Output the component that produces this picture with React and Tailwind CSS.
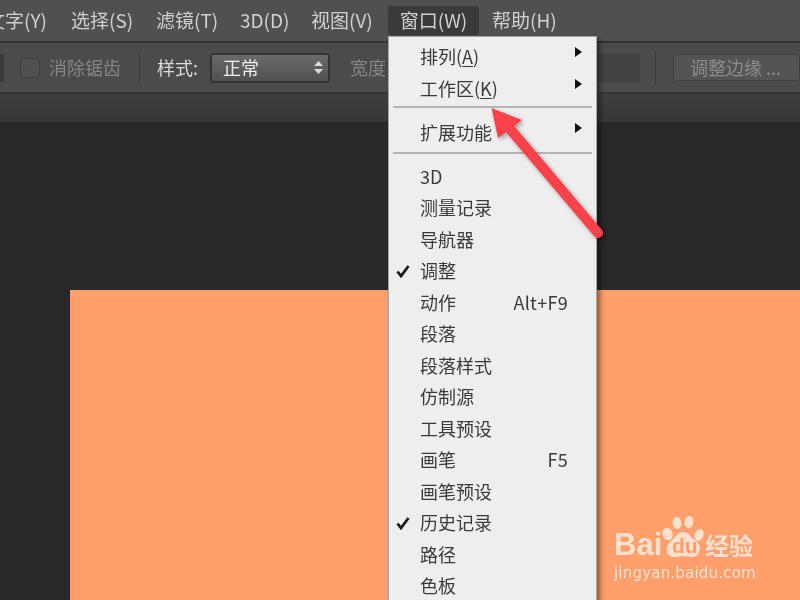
const cjk = { fontFamily: '"Noto Sans CJK SC", "Liberation Sans", sans-serif' };

const topMenus = [
  { label: '文字(Y)', box: 'w-[59px] -ml-[14px]' },
  { label: '选择(S)', box: 'w-[60px] ml-[26px]' },
  { label: '滤镜(T)', box: 'w-[60px] ml-[25px]' },
  { label: '3D(D)', box: 'w-[46px] ml-[24px]' },
  { label: '视图(V)', box: 'w-[62px] ml-[25px]' },
];

const windowItems = [
  { label: '3D' },
  { label: '测量记录' },
  { label: '导航器' },
  { label: '调整', checked: true },
  { label: '动作', shortcut: 'Alt+F9' },
  { label: '段落' },
  { label: '段落样式' },
  { label: '仿制源' },
  { label: '工具预设' },
  { label: '画笔', shortcut: 'F5' },
  { label: '画笔预设' },
  { label: '历史记录', checked: true },
  { label: '路径' },
  { label: '色板' },
];

function MenuRow({ label, hotkey, shortcut, checked, submenu }) {
  return (
    <div className="flex items-center h-[31.5px] shrink-0 text-[18px] text-[#3a3a3a]">
      <div className="w-[31px] flex pl-[7px]">
        {checked && (
          <svg width="14" height="14" viewBox="0 0 14 14">
            <path d="M1.5 7.5 L5 12 L12.5 2" fill="none" stroke="#1a1a1a" strokeWidth="2.8" />
          </svg>
        )}
      </div>
      <span>
        {label}
        {hotkey && (
          <>
            (<span className="underline underline-offset-2">{hotkey}</span>)
          </>
        )}
      </span>
      {shortcut && <span className="ml-auto mr-[28px] tracking-[0.3px]">{shortcut}</span>}
      {submenu && (
        <svg className="ml-auto mr-[14px] mb-[9px]" width="7" height="10" viewBox="0 0 7 10">
          <path d="M0 0 L7 5 L0 10 Z" fill="#111" />
        </svg>
      )}
    </div>
  );
}

function Watermark() {
  return (
    <div className="absolute right-[44px] bottom-[17px] w-[142px] text-[#ffe0cf]">
      <div className="flex items-end h-[46px]">
        <span className="w-[48px] shrink-0 text-[31px] leading-[30px] font-bold" style={{ fontFamily: '"Liberation Sans", sans-serif' }}>Bai</span>
        <div className="relative w-[44px] h-[46px] shrink-0">
          <svg width="44" height="46" viewBox="0 0 44 46" fill="#ffe0cf">
            <ellipse cx="5.5" cy="20" rx="5" ry="6.5" transform="rotate(-20 5.5 20)" />
            <ellipse cx="15" cy="9" rx="4.5" ry="6" transform="rotate(-8 15 9)" />
            <ellipse cx="27" cy="8" rx="4.5" ry="6" transform="rotate(8 27 8)" />
            <ellipse cx="37" cy="21" rx="4.5" ry="6" transform="rotate(20 37 21)" />
            <path d="M21 18 C27 18 28 23 34 27 C41 32 38 43 30 43 C26 43 24 42 21 42 C18 42 16 43 12 43 C4 43 2 33 9 27 C14 23 15 18 21 18 Z" />
          </svg>
          <span className="absolute left-[10px] bottom-[2px] text-[21px] leading-[24px] font-bold text-[#ff9f6b]" style={{ fontFamily: '"Liberation Sans", sans-serif' }}>du</span>
        </div>
        <span className="-ml-[1px] text-[24px] leading-[30px] font-bold whitespace-nowrap" style={cjk}>经验</span>
      </div>
      <div className="mt-[3px] text-[15px] leading-[20px] tracking-[0.2px] whitespace-nowrap" style={{ fontFamily: '"DejaVu Sans", sans-serif' }}>jingyan.baidu.com</div>
    </div>
  );
}

export default function App() {
  return (
    <div className="relative w-[800px] h-[600px] overflow-hidden bg-[#282828] flex flex-col blur-[0.4px]" style={cjk}>
      {/* menu bar */}
      <div className="h-[41px] shrink-0 flex items-center bg-[#505050] text-[19px] text-[#d0d0d0] whitespace-nowrap border-b-2 border-[#323232] box-content">
        {topMenus.map((m) => (
          <span key={m.label} className={`${m.box} shrink-0`}>{m.label}</span>
        ))}
        <span className="w-[91px] h-[29px] ml-[15px] shrink-0 rounded-[3px] bg-[#3a3a3a] flex items-center justify-center">窗口(W)</span>
        <span className="w-[64px] ml-[13px] shrink-0">帮助(H)</span>
      </div>

      {/* options bar */}
      <div className="h-[49px] shrink-0 flex items-center bg-[#4b4b4b] border-b-2 border-[#333333] box-content text-[18px] whitespace-nowrap">
        <div className="w-[4px] h-[28px] shrink-0 bg-[#3a3a3a]" />
        <div className="w-[20px] h-[20px] ml-[16px] shrink-0 rounded-[3px] border border-[#3d3d3d] bg-[#505050]" />
        <span className="ml-[9px] w-[71px] shrink-0 text-[#858585]">消除锯齿</span>
        <div className="ml-[19px] w-[1px] h-[34px] shrink-0 bg-[#383838]" />
        <span className="ml-[17px] w-[53px] shrink-0 text-[#dcdcdc]">样式:</span>
        <div className="w-[120px] h-[30px] shrink-0 rounded-[3px] border-2 border-[#333333] bg-gradient-to-b from-[#6a6a6a] to-[#505050] flex items-center pl-[11px] pr-[5px] text-[#ececec]">
          <span>正常</span>
          <svg className="ml-auto" width="9" height="13" viewBox="0 0 9 13" fill="#dcdcdc">
            <path d="M4.5 0 L9 5 L0 5 Z M0 8 L9 8 L4.5 13 Z" />
          </svg>
        </div>
        <span className="ml-[20px] w-[247px] shrink-0 text-[#858585]">宽度</span>
        <div className="w-[43px] h-[28px] shrink-0 bg-[#434343] border border-[#3f3f3f]" />
        <div className="ml-[15px] w-[1px] h-[34px] shrink-0 bg-[#383838]" />
        <div className="ml-[17px] w-[127px] h-[27px] shrink-0 rounded-[3px] border border-[#3f3f3f] bg-[#545454] flex items-center pl-[16px] text-[#8c8c8c]">调整边缘 ...</div>
      </div>

      {/* tab strip */}
      <div className="h-[28px] shrink-0 bg-gradient-to-b from-[#3e3e3e] to-[#363636]" />

      {/* canvas */}
      <div className="flex-1 pl-[70px] pt-[168px] flex flex-col">
        <div className="flex-1 bg-[#ff9f6b] relative">
          <Watermark />
        </div>
      </div>

      {/* window menu */}
      <div className="absolute left-[388px] top-[36px] w-[209px] h-[580px] bg-[#eeeeee] border border-[#a8a8a8] shadow-[3px_3px_5px_rgba(0,0,0,0.45)] pt-[4px] flex flex-col">
        <MenuRow label="排列" hotkey="A" submenu />
        <MenuRow label="工作区" hotkey="K" submenu />
        <div className="h-[2px] mt-[2px] mb-[9px] mx-[4px] bg-[#b4b4b4] shrink-0" />
        <MenuRow label="扩展功能" submenu />
        <div className="h-[2px] mt-[3px] mb-[7px] mx-[4px] bg-[#b4b4b4] shrink-0" />
        {windowItems.map((item) => (
          <MenuRow key={item.label} {...item} />
        ))}
      </div>

      {/* red arrow annotation */}
      <svg className="absolute left-0 top-0 drop-shadow-[2px_2px_2px_rgba(0,0,0,0.35)]" width="800" height="600" viewBox="0 0 800 600">
        <path d="M598 233 L505 123" fill="none" stroke="#fb4149" strokeWidth="10" strokeLinecap="round" />
        <path d="M491.5 108 L522 120 L498 138 Z" fill="#fb4149" />
      </svg>
    </div>
  );
}
